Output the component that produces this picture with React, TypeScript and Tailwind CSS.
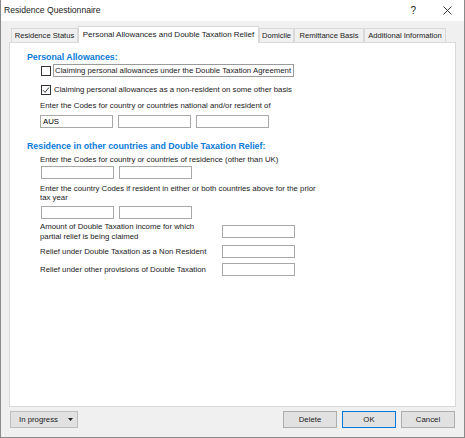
import React from 'react';

const font = { fontFamily: '"Liberation Sans", Arial, sans-serif' };

// Small WinForms-style text box
const Box = ({ value = '', className = '' }: { value?: string; className?: string }) => (
  <div
    className={`h-[13px] w-[73px] border border-[#a8a8a8] bg-white px-[2px] text-[7.8px] leading-[11px] text-black ${className}`}
  >
    {value}
  </div>
);

const Check = ({ checked = false }: { checked?: boolean }) => (
  <div className="flex h-[10px] w-[10px] items-center justify-center border border-[#333] bg-white">
    {checked && (
      <svg width="8" height="8" viewBox="0 0 8 8">
        <path d="M1 4.2 L3 6.3 L7 1.5" fill="none" stroke="#222" strokeWidth="0.9" />
      </svg>
    )}
  </div>
);

const tabs = [
  { label: 'Residence Status', w: 'w-[67px]' },
  { label: 'Personal Allowances and Double Taxation Relief', w: 'w-[181px]', active: true },
  { label: 'Domicile', w: 'w-[35px]' },
  { label: 'Remittance Basis', w: 'w-[70px]' },
  { label: 'Additional Information', w: 'w-[82px]' },
];

export default function App() {
  return (
    <div
      style={font}
      className="flex h-[438px] w-[465px] flex-col border-x border-b border-[#8a8a8a] bg-[#f0f0f0] text-[#1a1a1a]"
    >
      {/* Title bar */}
      <div className="flex h-[21px] items-center bg-white pl-[3px] pr-[12px] text-[8.6px]">
        <span className="flex-1">Residence Questionnaire</span>
        <span className="mr-[27px] text-[10px]">?</span>
        <svg width="9" height="9" viewBox="0 0 9 9">
          <path d="M0.5 0.5 L8.5 8.5 M8.5 0.5 L0.5 8.5" stroke="#222" strokeWidth="0.9" />
        </svg>
      </div>

      {/* Tabs */}
      <div className="mt-[5px] flex h-[16px] items-end pl-[10px]">
        {tabs.map((t) =>
          t.active ? (
            <div
              key={t.label}
              className={`${t.w} relative z-10 -mb-px flex h-[17px] items-center justify-center border-x border-t border-[#d9d9d9] bg-white text-[8px]`}
            >
              {t.label}
            </div>
          ) : (
            <div
              key={t.label}
              className={`${t.w} flex h-[14px] items-center justify-center border-x border-t border-[#d9d9d9] bg-[#f0f0f0] text-[7.6px]`}
            >
              {t.label}
            </div>
          )
        )}
      </div>

      {/* Tab panel */}
      <div className="mx-[8px] flex h-[365px] flex-col border border-[#d9d9d9] bg-white pl-[17px] text-[7.8px]">
        <div className="mt-[9px] text-[8.8px] font-bold leading-[10px] text-[#0a7ad8]">Personal Allowances:</div>

        <div className="ml-[14px] mt-[2px] flex h-[13px] items-center">
          <Check />
          <div className="ml-[2px] flex h-[13px] w-[241px] items-center border border-[#9a9a9a] pl-[1px]">
            Claiming personal allowances under the Double Taxation Agreement
          </div>
        </div>

        <div className="ml-[14px] mt-[6px] flex h-[13px] items-center">
          <Check checked />
          <div className="ml-[3px]">Claiming personal allowances as a non-resident on some other basis</div>
        </div>

        <div className="ml-[13px] mt-[5px] leading-[10px]">
          Enter the Codes for country or countries national and/or resident of
        </div>
        <div className="ml-[13px] mt-[4px] flex gap-[5px]">
          <Box value="AUS" />
          <Box />
          <Box />
        </div>

        <div className="mt-[13px] text-[8.8px] font-bold leading-[10px] text-[#0a7ad8]">
          Residence in other countries and Double Taxation Relief:
        </div>

        <div className="ml-[13px] mt-[4px] leading-[10px]">
          Enter the Codes for country or countries of residence (other than UK)
        </div>
        <div className="ml-[14px] mt-[1px] flex gap-[5px]">
          <Box />
          <Box />
        </div>

        <div className="ml-[13px] mt-[5px] w-[280px] leading-[9px]">
          Enter the country Codes if resident in either or both countries above for the prior tax year
        </div>
        <div className="ml-[14px] mt-[4px] flex gap-[5px]">
          <Box />
          <Box />
        </div>

        <div className="ml-[13px] mt-[3px] flex items-start">
          <div className="w-[182px] leading-[10px]">
            Amount of Double Taxation income for which
            <br />
            partial relief is being claimed
          </div>
          <Box className="mt-[3px]" />
        </div>

        <div className="ml-[13px] mt-[3px] flex items-center">
          <div className="w-[182px]">Relief under Double Taxation as a Non Resident</div>
          <Box />
        </div>

        <div className="ml-[13px] mt-[5px] flex items-center">
          <div className="w-[182px]">Relief under other provisions of Double Taxation</div>
          <Box />
        </div>
      </div>

      {/* Bottom buttons */}
      <div className="mt-[4px] flex px-[9px] text-[7.8px]">
        <div className="flex h-[17px] w-[68px] items-center border border-[#bdbdbd] bg-[#e1e1e1] pl-[8px] pr-[4px]">
          <span className="flex-1">In progress</span>
          <svg width="5" height="3" viewBox="0 0 5 3">
            <path d="M0 0 H5 L2.5 3 Z" fill="#222" />
          </svg>
        </div>
        <div className="flex-1" />
        <div className="flex gap-[5px]">
          <div className="flex h-[17px] w-[54px] items-center justify-center border border-[#adadad] bg-[#e1e1e1]">
            Delete
          </div>
          <div className="flex h-[17px] w-[54px] items-center justify-center border border-[#0078d7] bg-[#e1e1e1]">
            OK
          </div>
          <div className="flex h-[17px] w-[54px] items-center justify-center border border-[#adadad] bg-[#e1e1e1]">
            Cancel
          </div>
        </div>
      </div>
    </div>
  );
}
